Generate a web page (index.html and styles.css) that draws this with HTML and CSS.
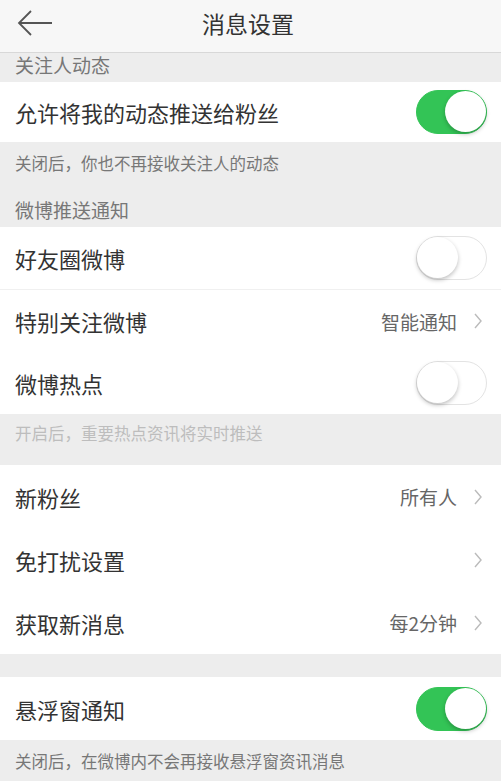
FILE: index.html
```html
<!DOCTYPE html>
<html>
<head>
    <meta charset="utf-8">
    <title>消息设置</title>
    <link rel="stylesheet" href="styles.css">
</head>
<body>
    <div class="page">
        <div class="nav">
            <div class="nav-back">
                <svg width="36" height="26" viewBox="0 0 36 26">
                    <line x1="2" y1="13" x2="35" y2="13" stroke="#555" stroke-width="1.8" />
                    <polyline points="14,1 2,13 14,25" fill="none" stroke="#555" stroke-width="1.8" />
                </svg>
            </div>
            <div class="nav-title">消息设置</div>
            <div></div>
        </div>

        <div class="group-title first">关注人动态</div>
        <div class="row">
            <span class="row-label">允许将我的动态推送给粉丝</span>
            <span class="switch on"><span class="knob"></span></span>
        </div>
        <div class="note">关闭后，你也不再接收关注人的动态</div>

        <div class="group-title">微博推送通知</div>
        <div class="row mid">
            <span class="row-label">好友圈微博</span>
            <span class="switch"><span class="knob"></span></span>
        </div>
        <div class="divider"></div>
        <div class="row mid">
            <span class="row-label">特别关注微博</span>
            <span class="row-value">智能通知</span>
            <svg class="chevron" width="8" height="16" viewBox="0 0 8 16"><polyline points="1,1 7,8 1,15" /></svg>
        </div>
        <div class="row mid">
            <span class="row-label">微博热点</span>
            <span class="switch"><span class="knob"></span></span>
        </div>
        <div class="note light">开启后，重要热点资讯将实时推送</div>

        <div class="row tall">
            <span class="row-label">新粉丝</span>
            <span class="row-value">所有人</span>
            <svg class="chevron" width="8" height="16" viewBox="0 0 8 16"><polyline points="1,1 7,8 1,15" /></svg>
        </div>
        <div class="row tall">
            <span class="row-label">免打扰设置</span>
            <svg class="chevron" width="8" height="16" viewBox="0 0 8 16"><polyline points="1,1 7,8 1,15" /></svg>
        </div>
        <div class="row tall">
            <span class="row-label">获取新消息</span>
            <span class="row-value">每2分钟</span>
            <svg class="chevron" width="8" height="16" viewBox="0 0 8 16"><polyline points="1,1 7,8 1,15" /></svg>
        </div>
        <div class="spacer"></div>

        <div class="row tall">
            <span class="row-label">悬浮窗通知</span>
            <span class="switch on"><span class="knob"></span></span>
        </div>
        <div class="note">关闭后，在微博内不会再接收悬浮窗资讯消息</div>
    </div>
</body>
</html>
```

FILE: styles.css
```css
body {
    margin: 0;
    background-color: #ededed;
    font-family: "Noto Sans CJK SC", "Liberation Sans", sans-serif;
    color: #333;
}
.page {
    width: 501px;
    height: 781px;
    overflow: hidden;
}
.nav {
    height: 52px;
    background-color: #f7f7f7;
    border-bottom: 1px solid #d8d8d8;
    display: grid;
    grid-template-columns: 70px 1fr 70px;
    align-items: center;
}
.nav-back {
    padding-left: 17px;
    padding-bottom: 6px;
    display: flex;
}
.nav-title {
    text-align: center;
    font-size: 23px;
    line-height: 26px;
    padding-bottom: 6px;
    padding-right: 5px;
    color: #333;
}
.group-title {
    font-size: 19px;
    line-height: 22px;
    color: #777;
    padding: 15px 15px 6px;
}
.group-title.first {
    padding: 1px 15px 6px;
}
.note {
    font-size: 16.5px;
    line-height: 22px;
    color: #777;
    padding: 10px 15px 10px;
}
.note.light {
    color: #bdbdbd;
    padding: 8px 15px 21px;
}
.row {
    height: 60px;
    background-color: #fff;
    display: flex;
    align-items: center;
    padding: 0 19px 0 15px;
}
.row.mid {
    height: 62px;
}
.row.tall {
    height: 63px;
}
.divider {
    height: 1px;
    background-color: #f0f0f0;
}
.spacer {
    height: 23px;
}
.row-label {
    flex: 1;
    font-size: 22px;
    color: #333;
}
.row-value {
    font-size: 19px;
    color: #666;
    margin-right: 17px;
}
.chevron polyline {
    fill: none;
    stroke: #bbb;
    stroke-width: 1.4;
}
.switch {
    position: relative;
    width: 71px;
    height: 44px;
    margin-right: -5px;
    border-radius: 22px;
    box-sizing: border-box;
    border: 1.5px solid #e3e3e3;
    background-color: #fff;
}
.switch.on {
    background-color: #33c456;
    border-color: #33c456;
}
.knob {
    position: absolute;
    top: 0;
    left: 0;
    width: 41px;
    height: 41px;
    border-radius: 50%;
    background-color: #fff;
    box-shadow: 0 2px 4px rgba(0, 0, 0, 0.25);
}
.switch.on .knob {
    left: auto;
    right: 0;
}
```
